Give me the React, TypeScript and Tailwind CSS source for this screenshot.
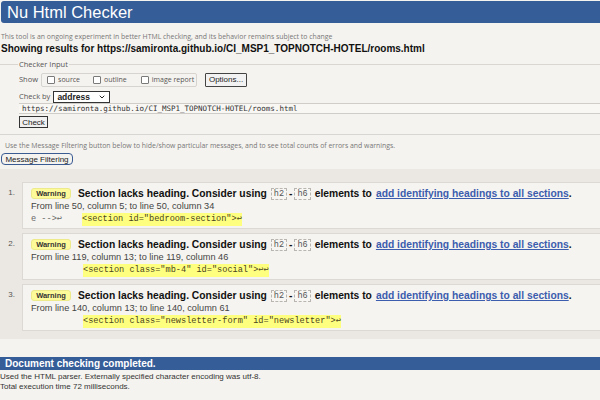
import { ChevronDown } from 'lucide-react'

type Msg = {
  n: number
  from: string
  pre?: string
  code: string
  indent: string
}

const messages: Msg[] = [
  {
    n: 1,
    from: 'From line 50, column 5; to line 50, column 34',
    pre: 'e -->↩',
    code: '<section id="bedroom-section">↩',
    indent: 'ml-[20px]',
  },
  {
    n: 2,
    from: 'From line 119, column 13; to line 119, column 46',
    code: '<section class="mb-4" id="social">↩↩',
    indent: 'ml-[52px]',
  },
  {
    n: 3,
    from: 'From line 140, column 13; to line 140, column 61',
    code: '<section class="newsletter-form" id="newsletter">↩',
    indent: 'ml-[52px]',
  },
]

function Checkbox({ label }: { label: string }) {
  return (
    <span className="flex items-center gap-[3px] whitespace-nowrap">
      <span className="w-[8px] h-[8px] border border-[#7a7a7a] rounded-[1px] bg-white" />
      <span>{label}</span>
    </span>
  )
}

function Code({ children }: { children: string }) {
  return (
    <code className="px-[2px] h-[12px] leading-[10px] border border-dashed border-[#b9b6b1] bg-[#f7f6f3] text-[#555] font-['Liberation_Mono',monospace] text-[8.5px] font-normal">
      {children}
    </code>
  )
}

function Message({ msg }: { msg: Msg }) {
  return (
    <li className="flex">
      <span className="w-[22px] pr-[7px] pt-[5px] text-right text-[8px] text-[#555]">{msg.n}.</span>
      <div className="flex-1 h-[47px] pt-[4px] pl-[8px] bg-[#f6f4f0] border-y border-l border-[#dcd9d4]">
        <div className="h-[13px] flex items-center whitespace-nowrap text-[10.3px] font-bold text-[#111]">
          <span className="w-[40px] h-[11px] flex items-center justify-center rounded-[3px] bg-[#fdfa9a] border border-[#ecea8a] text-[7.5px] text-[#333]">
            Warning
          </span>
          <span className="ml-[7px]">Section lacks heading. Consider using</span>
          <span className="ml-[4px] flex items-center gap-[2px]">
            <Code>h2</Code>
            <span>-</span>
            <Code>h6</Code>
          </span>
          <span className="ml-[4px]">elements to</span>
          <a className="ml-[4px] text-[#3c5dae] underline">add identifying headings to all sections</a>
          <span>.</span>
        </div>
        <div className="h-[13px] flex items-center text-[9.2px] text-[#444]">{msg.from}</div>
        <div className="h-[13px] flex items-center whitespace-nowrap font-['Liberation_Mono',monospace] text-[8.6px] text-[#444]">
          {msg.pre && <span className="text-[#666]">{msg.pre}</span>}
          <span className={`${msg.indent} bg-[#ffff7f] text-[#4a4420]`}>{msg.code}</span>
        </div>
      </div>
    </li>
  )
}

export default function App() {
  return (
    <div className="w-[600px] h-[400px] overflow-hidden bg-[#f5f3ef] font-['Liberation_Sans',Arial,sans-serif] text-[#222]">
      {/* Header */}
      <div className="mt-px ml-px h-[22px] rounded-l-[3px] bg-[#355d98] flex items-center pl-[6px]">
        <h1 className="text-[16.5px] text-white leading-none">Nu Html Checker</h1>
      </div>

      <p className="mt-[9px] h-[10px] pl-px flex items-center font-['Open_Sans',sans-serif] text-[6.9px] text-[#777]">
        This tool is an ongoing experiment in better HTML checking, and its behavior remains subject to change
      </p>
      <p className="h-[12px] pl-px flex items-center text-[10px] font-bold text-[#111] whitespace-nowrap">
        Showing results for https://samironta.github.io/CI_MSP1_TOPNOTCH-HOTEL/rooms.html
      </p>

      {/* Checker input */}
      <fieldset className="mt-[5px] border-y border-[#d9d6d1] pl-[19px] pb-[6px] font-['Open_Sans',sans-serif] text-[7.5px] text-[#555]">
        <legend className="h-[10px] leading-[10px] px-px -ml-px">Checker Input</legend>
        <div className="mt-[4px] h-[14px] flex items-center">
          <span>Show</span>
          <div className="ml-[3px] h-[14px] w-[156px] flex items-center pl-[5px] border border-[#d7d4cf] rounded-[2px] text-[7px]">
            <Checkbox label="source" />
            <span className="ml-[13px]">
              <Checkbox label="outline" />
            </span>
            <span className="ml-[14px]">
              <Checkbox label="image report" />
            </span>
          </div>
          <button className="ml-[8px] w-[42px] h-[14px] border border-[#444] rounded-[1px] bg-[#f2f2f2] text-[8px] text-[#222] font-['Liberation_Sans',sans-serif]">
            Options...
          </button>
        </div>
        <div className="mt-[4px] h-[12px] flex items-center">
          <span>Check by</span>
          <span className="ml-[3px] w-[57px] h-[12px] flex items-center justify-between px-[3px] border border-[#333] bg-white text-[8.5px] font-bold text-[#222] font-['Liberation_Sans',sans-serif]">
            address
            <ChevronDown className="w-[8px] h-[8px]" strokeWidth={3} />
          </span>
        </div>
        <div className="h-[11px] flex items-center pl-[3px] border-y border-[#d0cdc8] bg-[#f8f7f4] font-['DejaVu_Sans_Mono',monospace] text-[7.5px] text-[#333]">
          https://samironta.github.io/CI_MSP1_TOPNOTCH-HOTEL/rooms.html
        </div>
        <button className="block mt-[2px] w-[29px] h-[12px] border border-[#333] bg-[#f0f0f0] text-[8px] text-[#222] font-['Liberation_Sans',sans-serif]">
          Check
        </button>
      </fieldset>

      <p className="mt-[6px] h-[10px] pl-[5px] flex items-center font-['Open_Sans',sans-serif] text-[6.9px] text-[#777]">
        Use the Message Filtering button below to hide/show particular messages, and to see total counts of errors and warnings.
      </p>
      <button className="block mt-[2px] ml-px w-[72px] h-[12px] border-[1.5px] border-[#3b5b93] rounded-[4px] bg-[#f5f3ef] text-[8px] text-[#222]">
        Message Filtering
      </button>

      {/* Messages */}
      <ol className="mt-[4px] pt-[13px] pb-[8px] bg-[#ebe8e3] flex flex-col gap-[4px]">
        {messages.map((m) => (
          <Message key={m.n} msg={m} />
        ))}
      </ol>

      {/* Footer */}
      <div className="mt-[18px] h-[13px] bg-[#355d98] flex items-center pl-[5px] text-[10px] font-bold text-white">
        Document checking completed.
      </div>
      <p className="mt-[2px] h-[10px] flex items-center text-[8px] text-[#333]">
        Used the HTML parser. Externally specified character encoding was utf-8.
      </p>
      <p className="h-[10px] flex items-center text-[8px] text-[#333]">Total execution time 72 milliseconds.</p>
    </div>
  )
}
